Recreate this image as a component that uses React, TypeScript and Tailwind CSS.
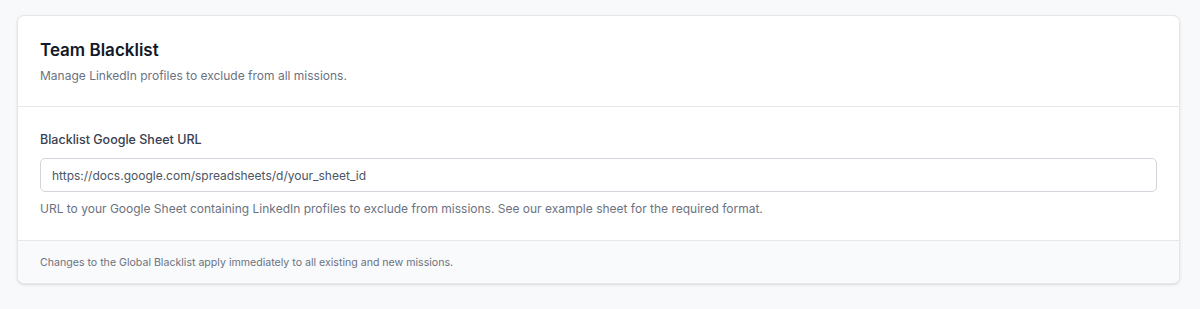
export default function App() {
  return (
    <div className="min-h-[309px] bg-[#f8f9fb] pl-[17px] pr-[20px] pt-[15px] pb-[25px] font-['Inter',sans-serif]">
      <div className="overflow-hidden rounded-[7px] border border-[#e5e7eb] bg-white shadow-sm">
        <div className="border-b border-[#e5e7eb] px-[22px] pt-[22px] pb-[21px]">
          <h2 className="text-[17px] leading-6 font-semibold text-[#111827]">Team Blacklist</h2>
          <p className="mt-[5px] text-xs leading-[18px] text-[#6b7280]">
            Manage LinkedIn profiles to exclude from all missions.
          </p>
        </div>

        <div className="px-[22px] pt-6 pb-[22px]">
          <label className="block text-[12.5px] leading-[18px] font-medium text-[#374151]">
            Blacklist Google Sheet URL
          </label>
          <input
            type="text"
            readOnly
            value="https://docs.google.com/spreadsheets/d/your_sheet_id"
            className="mt-[9px] block h-[34px] w-full rounded-[5px] border border-[#d1d5db] bg-white px-[11px] text-xs text-[#4b5563] focus:outline-none"
          />
          <p className="mt-2 text-xs leading-[18px] text-[#6b7280]">
            URL to your Google Sheet containing LinkedIn profiles to exclude from missions. See our example sheet for the required format.
          </p>
        </div>

        <div className="border-t border-[#e5e7eb] bg-[#f9fafb] px-[22px] pt-[14px] pb-3">
          <p className="text-[10.6px] leading-4 text-[#6b7280]">
            Changes to the Global Blacklist apply immediately to all existing and new missions.
          </p>
        </div>
      </div>
    </div>
  );
}
